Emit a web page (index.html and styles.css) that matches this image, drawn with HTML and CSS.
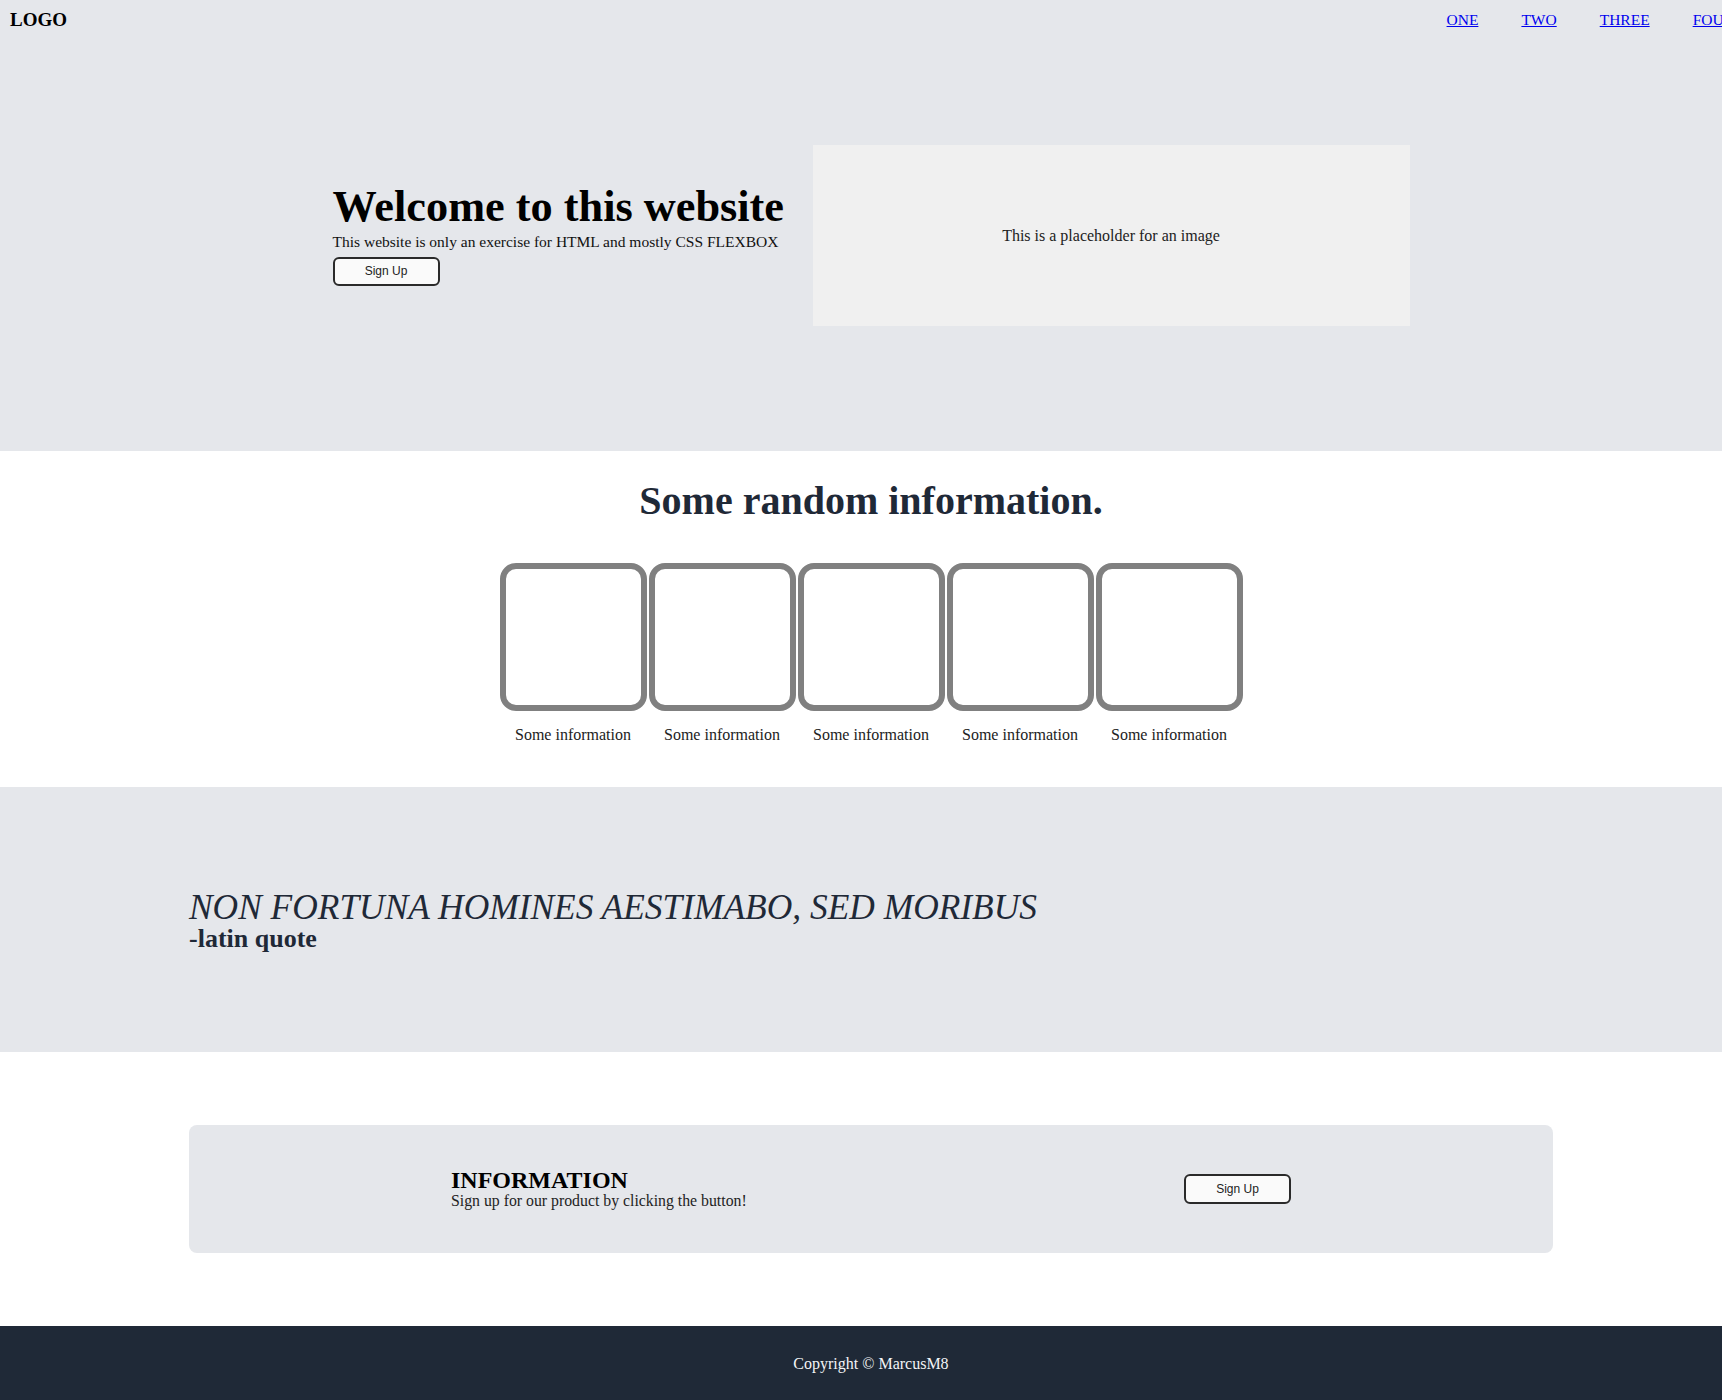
FILE: index.html
```html
<!DOCTYPE html>
<html lang="en">
<head>
<meta charset="utf-8">
<title>Landing page</title>
<link rel="stylesheet" href="styles.css">
</head>
<body>
<div class="page">
  <div class="top">
    <header class="header">
      <div class="logo">LOGO</div>
      <nav class="nav">
        <a href="#">ONE</a>
        <a href="#">TWO</a>
        <a href="#">THREE</a>
        <a href="#">FOUR</a>
      </nav>
    </header>
    <section class="hero">
      <div class="hero-text">
        <h1 class="hero-title">Welcome to this website</h1>
        <p class="hero-sub">This website is only an exercise for HTML and mostly CSS FLEXBOX</p>
        <button class="btn">Sign Up</button>
      </div>
      <div class="hero-image">This is a placeholder for an image</div>
    </section>
  </div>

  <section class="info">
    <h2 class="info-title">Some random information.</h2>
    <div class="cards">
      <div class="card"><div class="card-box"></div><p class="card-label">Some information</p></div>
      <div class="card"><div class="card-box"></div><p class="card-label">Some information</p></div>
      <div class="card"><div class="card-box"></div><p class="card-label">Some information</p></div>
      <div class="card"><div class="card-box"></div><p class="card-label">Some information</p></div>
      <div class="card"><div class="card-box"></div><p class="card-label">Some information</p></div>
    </div>
  </section>

  <section class="quote">
    <p class="quote-text">NON FORTUNA HOMINES AESTIMABO, SED MORIBUS</p>
    <p class="quote-author">-latin quote</p>
  </section>

  <section class="cta">
    <div class="cta-card">
      <div class="cta-text">
        <h3 class="cta-title">INFORMATION</h3>
        <p class="cta-sub">Sign up for our product by clicking the button!</p>
      </div>
      <button class="btn">Sign Up</button>
    </div>
  </section>

  <footer class="footer">Copyright © MarcusM8</footer>
</div>
</body>
</html>
```

FILE: styles.css
```css
html {
  overflow-x: hidden;
}

body {
  margin: 0;
  font-family: "Liberation Serif", "Times New Roman", serif;
  color: #111;
  background: #fff;
}

.page {
  width: 1742px;
}

.top {
  background: #e5e7eb;
}

.header {
  height: 40px;
  display: flex;
  justify-content: space-between;
  align-items: center;
  padding: 0 8px 0 10px;
}

.logo {
  font-weight: bold;
  font-size: 19px;
  color: #000;
}

.nav {
  display: flex;
  gap: 43px;
}

.nav a {
  font-size: 15.5px;
  color: #0000ee;
  text-decoration: underline;
}

.hero {
  display: flex;
  justify-content: center;
  align-items: center;
  gap: 29px;
  padding: 105px 0 125px;
}

.hero-text {
  width: 451px;
  display: flex;
  flex-direction: column;
  align-items: flex-start;
  margin-top: -3px;
}

.hero-title {
  margin: 0;
  font-size: 44.3px;
  line-height: 48px;
  font-weight: bold;
  color: #000;
  white-space: nowrap;
}

.hero-sub {
  margin: 1px 0 0;
  font-size: 15.5px;
  line-height: 20px;
  color: #111;
  white-space: nowrap;
}

.btn {
  width: 107px;
  height: 29px;
  margin-top: 5px;
  border: 2px solid #2a2a2a;
  border-radius: 6px;
  background: #fafafa;
  font-family: "Liberation Sans", Arial, sans-serif;
  font-size: 12px;
  color: #222;
  padding: 0;
}

.hero-image {
  width: 597px;
  height: 181px;
  background: #f0f0f0;
  display: flex;
  align-items: center;
  justify-content: center;
  font-size: 16px;
  color: #222;
}

.info {
  background: #fff;
  padding: 27px 0 43px;
  display: flex;
  flex-direction: column;
  align-items: center;
}

.info-title {
  margin: 0;
  font-size: 40px;
  line-height: 46px;
  font-weight: bold;
  color: #1f2937;
}

.cards {
  display: flex;
  gap: 2px;
  margin-top: 39px;
}

.card {
  width: 147px;
  display: flex;
  flex-direction: column;
  align-items: center;
}

.card-box {
  width: 147px;
  height: 148px;
  box-sizing: border-box;
  border: 6px solid #808080;
  border-radius: 16px;
  background: #fff;
}

.card-label {
  margin: 14px 0 0;
  font-size: 16px;
  line-height: 19px;
  color: #222;
  white-space: nowrap;
}

.quote {
  background: #e5e7eb;
  height: 265px;
  box-sizing: border-box;
  padding-left: 189px;
  display: flex;
  flex-direction: column;
  justify-content: center;
  color: #1f2937;
}

.quote-text {
  margin: 0;
  font-style: italic;
  font-size: 35.4px;
  line-height: 38px;
}

.quote-author {
  margin: 0;
  font-weight: bold;
  font-size: 26px;
  line-height: 26px;
}

.cta {
  background: #fff;
  padding: 73px 0;
  display: flex;
  justify-content: center;
}

.cta-card {
  width: 1364px;
  height: 128px;
  box-sizing: border-box;
  background: #e5e7eb;
  border-radius: 8px;
  padding: 0 262px;
  display: flex;
  justify-content: space-between;
  align-items: center;
}

.cta-title {
  margin: 0;
  font-size: 24px;
  line-height: 24px;
  font-weight: bold;
  color: #000;
}

.cta-sub {
  margin: 0;
  font-size: 15.8px;
  line-height: 18px;
  color: #222;
}

.cta-card .btn {
  margin-top: 0;
  height: 30px;
}

.footer {
  background: #1f2937;
  height: 75px;
  display: flex;
  align-items: center;
  justify-content: center;
  color: #f3f4f6;
  font-size: 16px;
}
```
